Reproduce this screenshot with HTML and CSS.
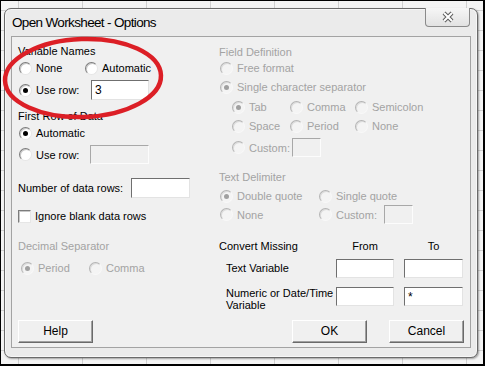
FILE: index.html
```html
<!DOCTYPE html>
<html>
<head>
	<meta charset="utf-8">
	<title>Open Worksheet - Options</title>
	<link rel="stylesheet" href="styles.css">
</head>
<body>
	<div class="screen">
		<div class="window">
			<div class="titlebar">
				<span class="title">Open Worksheet - Options</span>
				<div class="close-btn">
					<svg width="14" height="12" viewBox="0 0 14 12">
						<path d="M3 2 L11 10 M11 2 L3 10" stroke="#5c5c5c" stroke-width="4" />
						<path d="M3 2 L11 10 M11 2 L3 10" stroke="#fff" stroke-width="2" />
					</svg>
				</div>
			</div>

			<div class="client">
				<!-- left, top -->
				<div class="col">
					<p class="row">Variable Names</p>
					<div class="row mt1">
						<label class="opt w66"><span class="radio"></span>None</label>
						<label class="opt"><span class="radio"></span>Automatic</label>
					</div>
					<div class="row h20 mt4">
						<label class="opt w73"><span class="radio on"></span>Use row:</label>
						<div class="field w58 h20">3</div>
					</div>
					<p class="row mt8">First Row of Data</p>
					<div class="row mt1">
						<label class="opt"><span class="radio on"></span>Automatic</label>
					</div>
					<div class="row h19 mt4">
						<label class="opt w72"><span class="radio"></span>Use row:</label>
						<div class="field off w59 h19"></div>
					</div>
					<div class="row h20 mt14">
						<span class="w113">Number of data rows:</span>
						<div class="field w59 h20"></div>
					</div>
					<div class="row mt10">
						<label class="opt"><span class="check"></span>Ignore blank data rows</label>
					</div>
				</div>

				<!-- right, top -->
				<div class="col dim">
					<p class="row mt1">Field Definition</p>
					<div class="row">
						<label class="opt"><span class="radio"></span>Free format</label>
					</div>
					<div class="row mt3">
						<label class="opt"><span class="radio on"></span>Single character separator</label>
					</div>
					<div class="row mt4 indent">
						<label class="opt w58"><span class="radio on"></span>Tab</label>
						<label class="opt w65"><span class="radio"></span>Comma</label>
						<label class="opt"><span class="radio"></span>Semicolon</label>
					</div>
					<div class="row mt3 indent">
						<label class="opt w58"><span class="radio"></span>Space</label>
						<label class="opt w65"><span class="radio"></span>Period</label>
						<label class="opt"><span class="radio"></span>None</label>
					</div>
					<div class="row h19 mt4 indent">
						<label class="opt"><span class="radio"></span>Custom:</label>
						<div class="field off w29 h19 ml2"></div>
					</div>
					<p class="row mt12">Text Delimiter</p>
					<div class="row mt3">
						<label class="opt w99"><span class="radio on"></span>Double quote</label>
						<label class="opt"><span class="radio"></span>Single quote</label>
					</div>
					<div class="row h19 mt1">
						<label class="opt w99"><span class="radio"></span>None</label>
						<label class="opt"><span class="radio"></span>Custom:</label>
						<div class="field off w29 h19 ml7"></div>
					</div>
				</div>

				<!-- left, middle -->
				<div class="col dim">
					<p class="row">Decimal Separator</p>
					<div class="row mt6 shift">
						<label class="opt w68"><span class="radio on"></span>Period</label>
						<label class="opt"><span class="radio"></span>Comma</label>
					</div>
				</div>

				<!-- right, middle -->
				<div class="missing">
					<span class="head">Convert Missing</span>
					<span class="center">From</span>
					<span class="center">To</span>

					<span class="name mt5">Text Variable</span>
					<div class="field h19 mt5"></div>
					<div class="field h19 mt5"></div>

					<span class="name two mt9">Numeric or Date/Time<br>Variable</span>
					<div class="field h19 mt9"></div>
					<div class="field h19 mt9">*</div>
				</div>

				<!-- buttons -->
				<div class="btn-row">
					<div class="btn">Help</div>
				</div>
				<div class="btn-row end">
					<div class="btn">OK</div>
					<div class="btn">Cancel</div>
				</div>
			</div>
		</div>

		<svg class="mark" width="485" height="366" viewBox="0 0 485 366">
			<ellipse cx="83" cy="78" rx="78" ry="39" transform="rotate(-2 83 78)" />
		</svg>
	</div>
</body>
</html>
```

FILE: styles.css
```css
* {
	margin: 0;
	box-sizing: border-box;
}

body {
	font-family: "Liberation Sans", Arial, sans-serif;
	font-size: 11px;
	color: #000;
	background: #fff;
}

.screen {
	position: relative;
	width: 485px;
	height: 366px;
	overflow: hidden;
	padding: 8px 0 0 4px;
	background-color: #f4f4f4;
	background-image:
		linear-gradient(#d0d0d0 1px, transparent 1px),
		linear-gradient(90deg, #d0d0d0 1px, transparent 1px);
	background-size: 100% 20px, 64px 100%;
	background-position: 0 30px, 18px 0;
	box-shadow: inset 1px 1px 0 #000, inset -2px -2px 0 #000;
}

.window {
	width: 474px;
	height: 350px;
	border: 1px solid #6a6a6a;
	border-radius: 7px;
	background: #ebebeb;
	box-shadow: 1px 1px 2px rgba(0, 0, 0, .35), inset 0 0 0 1px #f7f7f7;
}

/* title bar */
.titlebar {
	display: flex;
	justify-content: space-between;
	align-items: flex-start;
	height: 27px;
}

.title {
	padding-left: 7px;
	line-height: 27px;
	font-size: 13.5px;
	letter-spacing: -0.65px;
}

.close-btn {
	display: flex;
	align-items: center;
	justify-content: center;
	width: 45px;
	height: 19px;
	margin: -1px 7px 0 0;
	border: 1px solid #8a8a8a;
	border-top: none;
	border-radius: 0 0 4px 4px;
	background: linear-gradient(#f6f6f6, #e2e2e2);
}

/* client area */
.client {
	display: grid;
	grid-template-columns: 201px 1fr;
	grid-template-rows: 195px 82px 23px;
	width: 460px;
	height: 312px;
	margin-left: 6px;
	padding: 6px 6px 0 6px;
	border: 1px solid #a3a3a3;
	background: #f0f0f0;
}

.col {
	display: flex;
	flex-direction: column;
}

.dim {
	color: #a3a3a3;
}

.row {
	display: flex;
	align-items: center;
	height: 16px;
	white-space: nowrap;
}

.indent {
	padding-left: 12px;
}

.shift {
	padding-left: 2px;
}

.opt {
	display: flex;
	align-items: center;
	gap: 4px;
}

.radio {
	position: relative;
	width: 13px;
	height: 13px;
	margin-left: 1px;
	border: 1px solid;
	border-color: #7c7c7c #e6e6e6 #e6e6e6 #7c7c7c;
	border-radius: 50%;
	background: #fff;
	box-shadow: inset 1px 1px 0 #c8c8c8;
	flex: none;
}

.radio.on::after {
	content: "";
	position: absolute;
	left: 3px;
	top: 3px;
	width: 5px;
	height: 5px;
	border-radius: 50%;
	background: #000;
}

.dim .radio {
	border-color: #b4b4b4 #f8f8f8 #f8f8f8 #b4b4b4;
	background: #f4f4f4;
	box-shadow: inset 1px 1px 0 #dcdcdc;
}

.dim .radio.on::after {
	background: #a0a0a0;
}

.check {
	width: 13px;
	height: 13px;
	border: 1px solid;
	border-color: #7c7c7c #e6e6e6 #e6e6e6 #7c7c7c;
	background: #fff;
	box-shadow: inset 1px 1px 0 #c8c8c8;
	flex: none;
}

.field {
	padding: 2px 3px;
	border: 1px solid;
	border-color: #6f6f6f #e3e3e3 #e3e3e3 #6f6f6f;
	background: #fff;
	font-size: 12px;
	line-height: 14px;
	flex: none;
}

.field.off {
	border-color: #a8a8a8 #fcfcfc #fcfcfc #a8a8a8;
	background: #f0f0f0;
}

/* convert missing grid */
.missing {
	display: grid;
	grid-template-columns: 107px 58px 59px;
	column-gap: 10px;
	align-content: start;
	align-items: start;
}

.missing .head,
.missing .center {
	line-height: 16px;
}

.missing .center {
	text-align: center;
}

.missing .name {
	padding-left: 7px;
	line-height: 19px;
	white-space: nowrap;
}

.missing .two {
	line-height: 12px;
}

/* buttons */
.btn-row {
	display: flex;
	gap: 22px;
}

.btn-row.end {
	justify-content: flex-end;
}

.btn {
	width: 75px;
	height: 23px;
	border: 1px solid;
	border-color: #fff #6a6a6a #6a6a6a #fff;
	background: #f0f0f0;
	box-shadow: inset -1px -1px 0 #a0a0a0;
	font-size: 12px;
	line-height: 21px;
	text-align: center;
}

/* sizes */
.h19 { height: 19px; }
.h20 { height: 20px; }
.w29 { width: 29px; }
.w58 { width: 58px; }
.w59 { width: 59px; }
.w65 { width: 65px; }
.w66 { width: 66px; }
.w68 { width: 68px; }
.w72 { width: 72px; }
.w73 { width: 73px; }
.w99 { width: 99px; }
.w113 { width: 113px; }
.ml2 { margin-left: 2px; }
.ml7 { margin-left: 7px; }
.mt1 { margin-top: 1px; }
.mt3 { margin-top: 3px; }
.mt4 { margin-top: 4px; }
.mt5 { margin-top: 5px; }
.mt6 { margin-top: 6px; }
.mt8 { margin-top: 8px; }
.mt9 { margin-top: 9px; }
.mt10 { margin-top: 10px; }
.mt12 { margin-top: 12px; }
.mt14 { margin-top: 14px; }

/* red hand-drawn mark over the screenshot */
.mark {
	position: absolute;
	left: 0;
	top: 0;
	pointer-events: none;
}

.mark ellipse {
	fill: none;
	stroke: #dc1f26;
	stroke-width: 4.5;
}
```
